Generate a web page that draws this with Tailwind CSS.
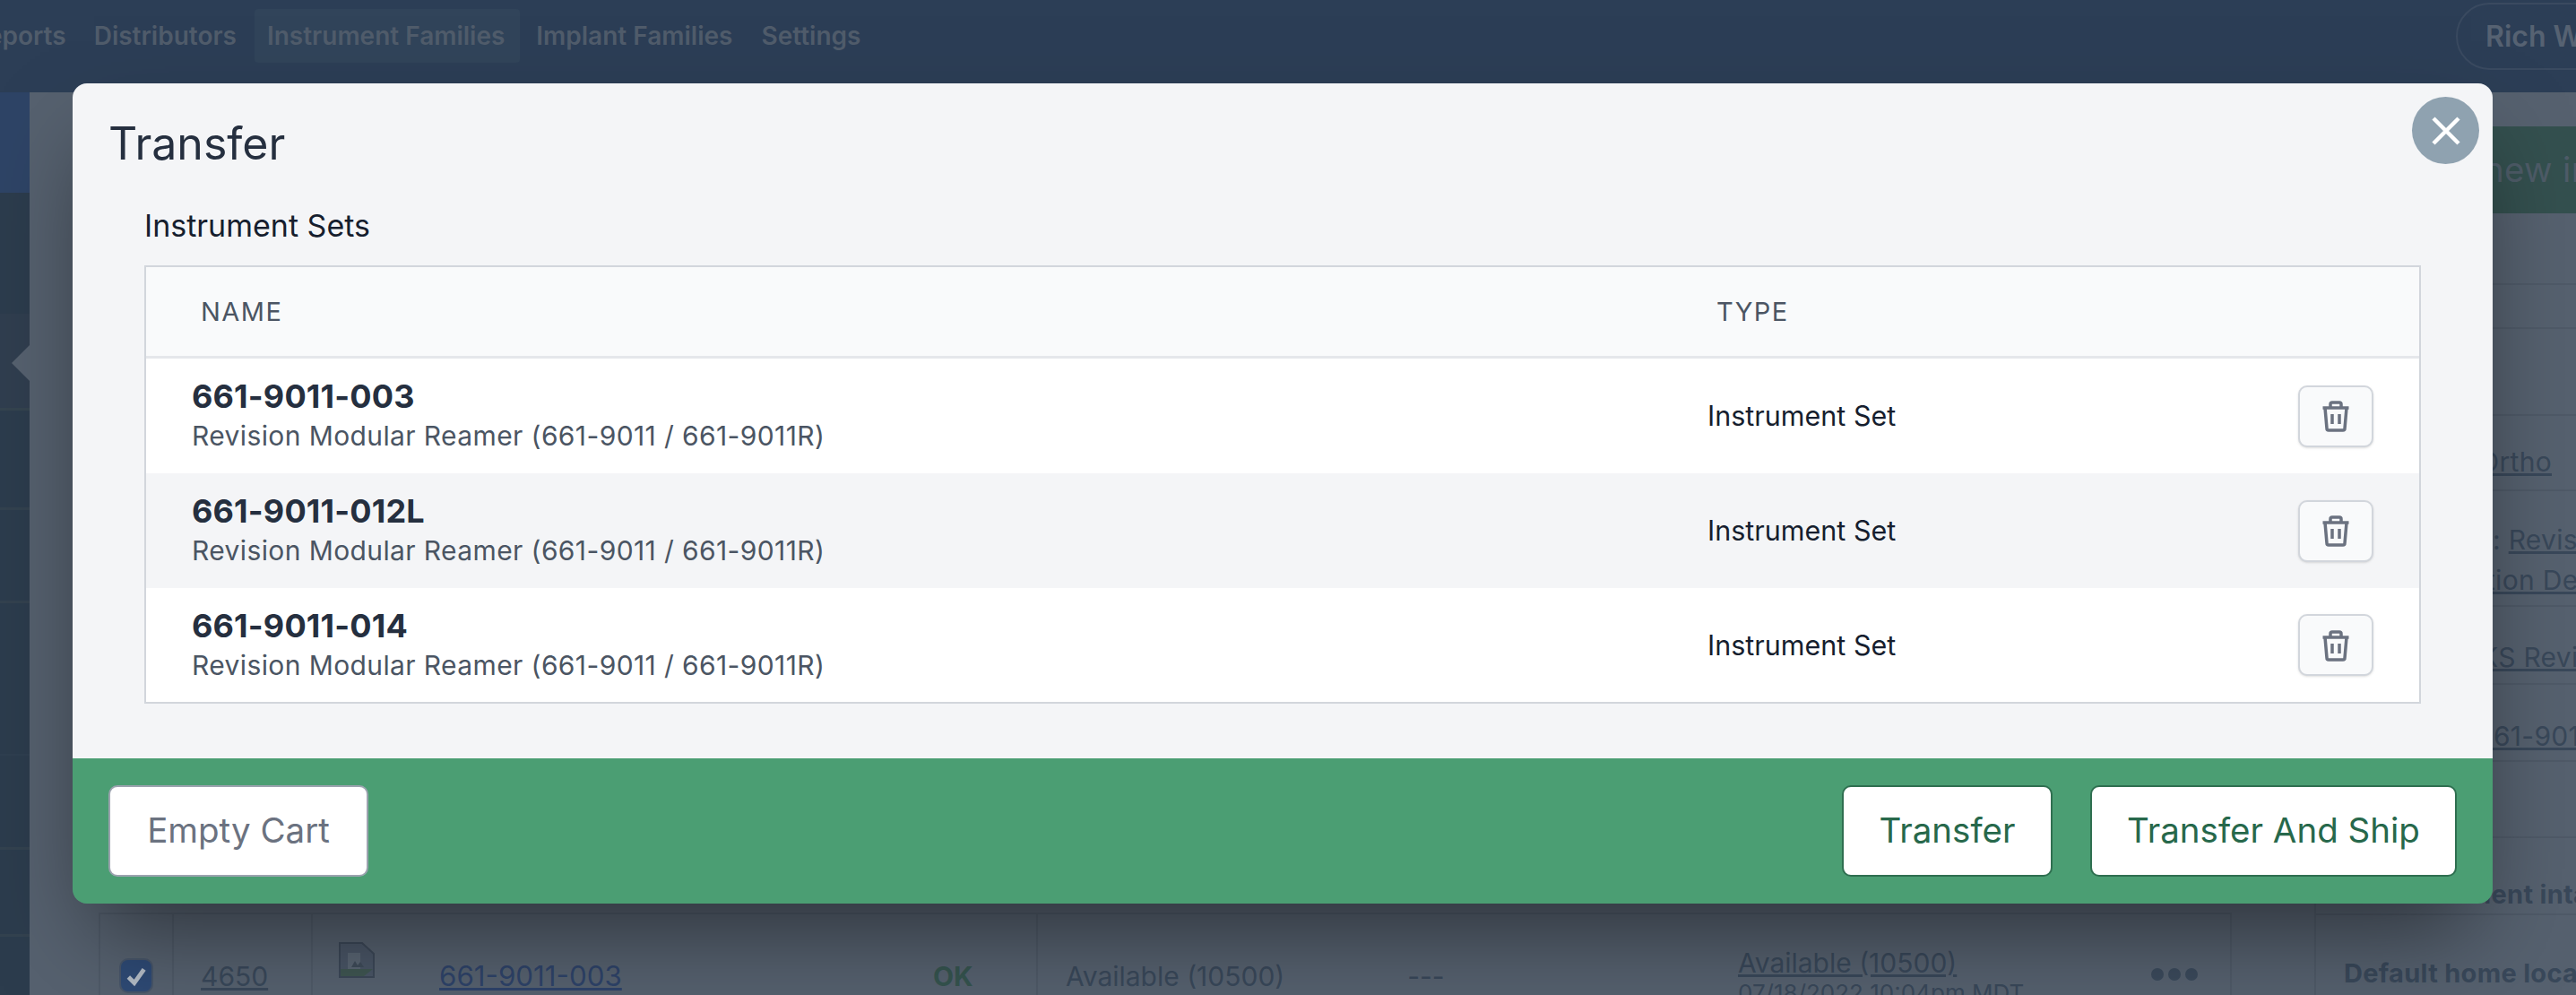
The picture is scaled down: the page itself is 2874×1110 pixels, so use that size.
<!doctype html>
<html lang="en">
<head>
<meta charset="utf-8">
<title>Transfer</title>
<script src="https://cdn.jsdelivr.net/npm/@tailwindcss/browser@4"></script>
</head>
<body class="m-0 h-[1110px] w-[2874px] overflow-hidden bg-[#56616f] font-['Inter',sans-serif]">
<div class="relative h-[1110px] w-[2874px] overflow-hidden">
  <!-- dimmed page behind the dialog -->
  <header class="flex h-[103px] items-start bg-[#2c3e56] text-[28px] font-semibold text-[#505c6b]">
    <nav class="ml-[-46px] mt-[10px] flex h-[60px] items-center">
      <span class="px-[14px]">Reports</span>
      <span class="ml-[3px] px-[14px]">Distributors</span>
      <span class="ml-[6px] flex h-[60px] items-center rounded bg-[#31445a] pl-[14px] pr-[17px]">Instrument Families</span>
      <span class="px-[18px]">Implant Families</span>
      <span class="px-[14px]">Settings</span>
    </nav>
    <div class="ml-auto mr-[-166px] mt-[3px] flex h-[75px] w-[300px] items-center whitespace-nowrap rounded-full border-2 border-[#3a4a60] pl-[31px] text-[32px] font-semibold text-[#566272]">Rich Wilson</div>
  </header>
  <div class="flex h-[1007px]">
    <aside class="relative flex w-[33px] flex-col bg-[#2c3c4d]">
      <div class="h-[112px] bg-[#2e4466]"></div>
      <div class="h-[135px]"></div>
      <div class="h-[108px] border-b-[3px] border-[#35444f] bg-[#303e4f]"></div>
      <div class="h-[111px] border-b-[3px] border-[#33424f]"></div>
      <div class="h-[104px] border-b-[3px] border-[#33424f]"></div>
      <div class="h-[170px] border-b-[2px] border-[#2f3f50]"></div>
      <div class="h-[105px] border-b-[3px] border-[#33424f]"></div>
      <div class="h-[97px] border-b-[3px] border-[#33424f]"></div>
      <svg class="absolute left-[13px] top-[282px]" width="20" height="40" viewBox="0 0 20 40"><path d="M20 0 L0 20 L20 40 Z" fill="#56616f"/></svg>
    </aside>
    <main class="flex flex-1">
      <section class="ml-[77px] mr-[92px] mt-auto h-[92px] w-[2380px] border-x-2 border-t-2 border-[#4f5a68] text-[30px] leading-[41px] text-[#39485a]">
        <div class="grid h-full grid-cols-[82px_155px_624px_185px_783px_123px] items-center">
          <div class="flex h-full items-end justify-center border-r-2 border-[#4f5a68] pb-[2px]">
            <span class="flex h-[39px] w-[38px] items-center justify-center rounded-[10px] border-2 border-[#475569] bg-[#2e4a75]">
              <svg width="26" height="26" viewBox="0 0 24 24"><path d="M4 13 L10 19 L20 5" fill="none" stroke="#b4bcc6" stroke-width="4.5"/></svg>
            </span>
          </div>
          <div class="flex h-full items-end border-r-2 border-[#4f5a68] pl-[30px]"><span class="underline">4650</span></div>
          <div class="flex h-full items-end">
            <svg class="mb-[19px] ml-[29px] mr-[72px]" width="40" height="40" viewBox="0 0 40 40"><path d="M1 1 H26 L39 13 V39 H1 Z" fill="#4a5667" stroke="#3c4858" stroke-width="2"/><path d="M10 12 H24 V30 H10 Z" fill="#5a6674"/><path d="M14 28 L18 21 L21 26 L24 22 L28 28 Z" fill="#3f4c5a"/><path d="M2 30 H38 L28 38 H2 Z" fill="#3f5652"/></svg>
            <span class="text-[31.3px] text-[#2e4369] underline">661-9011-003</span>
          </div>
          <div class="flex h-full items-end border-r-2 border-[#4f5a68] pl-[68px] font-bold text-[#35544f]"><span>OK</span></div>
          <div class="flex h-full items-end pl-[31px]"><span>Available (10500)</span><span class="ml-[137px]">---</span></div>
          <div class="h-full"></div>
        </div>
      </section>
      <div class="w-[292px]"></div>
    </main>
  </div>

  <!-- right column, behind the dialog -->
  <aside class="absolute right-0 top-[103px] flex h-[1007px] w-[292px] flex-col overflow-hidden border-l-2 border-[#4f5a68] text-[30px] tracking-[0.01em] text-[#39485a]">
    <div class="mt-[38px] flex h-[100px] w-[292px] items-center bg-[#34504f] pl-[187px] text-[38.5px] text-[#4e5c68]"><span class="whitespace-nowrap">new instrument</span></div>
    <div class="h-[82px] border-b-2 border-[#4f5a68]"></div>
    <div class="h-[50px] border-b-2 border-[#4f5a68]"></div>
    <div class="h-[99px] border-b-2 border-[#4f5a68]"></div>
    <div class="flex h-[86px] items-center justify-end border-b-2 border-[#4f5a68] pr-[27px] pt-[22px]"><span class="underline">Ortho</span></div>
    <div class="flex h-[132px] flex-col justify-center border-b-2 border-[#4f5a68] pl-[190px] pt-[26px] leading-[45px]"><span class="ml-[7px] whitespace-nowrap">: <span class="underline">Revision</span></span><span class="whitespace-nowrap underline">tion Detail</span></div>
    <div class="flex h-[88px] items-center border-b-2 border-[#4f5a68] pl-[183px] pt-[28px]"><span class="whitespace-nowrap underline">KS Revision</span></div>
    <div class="flex h-[87px] items-center border-b-2 border-[#4f5a68] pl-[179px] pt-[32px]"><span class="whitespace-nowrap underline">661-9011</span></div>
    <div class="h-[88px] border-b-2 border-[#4f5a68]"></div>
    <div class="flex h-[87px] items-center border-b-2 border-[#4f5a68] pl-[84px] pt-[40px] text-[29px] font-bold"><span class="whitespace-nowrap">Instrument intake</span></div>
    <div class="flex h-[90px] items-center pl-[31px] pt-[40px] text-[29px] font-bold"><span class="whitespace-nowrap">Default home location</span></div>
  </aside>

  <!-- tail of the obscured table -->
  <div class="absolute left-[1939px] top-[1056px] text-[30px] leading-[36px] text-[#39485a]"><span class="underline">Available (10500)</span><div class="text-[26px] leading-[32px]">07/18/2022 10:04pm MDT</div></div>
  <div class="absolute left-[2400px] top-[1080px] flex gap-[5px]"><span class="h-[14px] w-[14px] rounded-full bg-[#3b4a5c]"></span><span class="h-[14px] w-[14px] rounded-full bg-[#3b4a5c]"></span><span class="h-[14px] w-[14px] rounded-full bg-[#3b4a5c]"></span></div>

  <!-- dialog -->
  <div class="absolute left-[81px] top-[93px] w-[2700px] rounded-[16px] shadow-[0_50px_100px_-24px_rgba(0,0,0,0.5)]">
    <div class="relative h-[753px] rounded-t-[16px] bg-[#f4f5f7] pt-[43px]">
      <button class="absolute right-[15px] top-[15px] flex h-[75px] w-[75px] items-center justify-center rounded-full bg-[#8fa2b0]">
        <svg width="34" height="34" viewBox="0 0 34 34"><path d="M3 3 L31 31 M31 3 L3 31" stroke="#fff" stroke-width="4.5" fill="none"/></svg>
      </button>
      <h2 class="h-[48px] pl-[40px] text-[50px] leading-[48px] font-normal text-[#252f3f]">Transfer</h2>
      <div class="px-[80px]">
        <h3 class="mb-[24px] mt-[48px] h-[40px] text-[34px] leading-[40px] font-normal text-[#161e2e]">Instrument Sets</h3>
        <div class="border-2 border-[#d2d6dc] bg-white">
          <div class="flex h-[102px] items-center border-b-[3px] border-[#e5e7eb] bg-[#f9fafb] text-[29px] tracking-[0.05em] text-[#4b5563]">
            <span class="ml-[61px] w-[1691px]">NAME</span><span>TYPE</span>
          </div>
          <div class="flex h-[128px] items-center bg-white">
            <div class="ml-[51px] w-[1691px]">
              <div class="text-[36px] leading-[44px] font-bold tracking-[0.005em] text-[#252f3f]">661-9011-003</div>
              <div class="text-[30px] leading-[44px] tracking-[0.013em] text-[#4b5563]">Revision Modular Reamer (661-9011 / 661-9011R)</div>
            </div>
            <span class="text-[30.5px] text-[#161e2e]">Instrument Set</span>
            <button class="ml-auto mr-[51px] flex h-[69px] w-[84px] items-center justify-center rounded-[10px] border-2 border-[#d2d6dc] bg-[#f9fafb] shadow-sm">
              <svg width="36" height="36" viewBox="0 0 36 36" fill="none" stroke="#6b7280" stroke-width="3.5" stroke-linejoin="round"><path d="M3.5 9 H32.5"/><path d="M12 9 V5 a2 2 0 0 1 2-2 h8 a2 2 0 0 1 2 2 V9"/><path d="M6 9 L8 32 a2 2 0 0 0 2 2 h16 a2 2 0 0 0 2-2 L30 9"/><path d="M14 16 V27 M22 16 V27"/></svg>
            </button>
          </div>
          <div class="flex h-[128px] items-center bg-[#f4f5f7]">
            <div class="ml-[51px] w-[1691px]">
              <div class="text-[36px] leading-[44px] font-bold tracking-[0.005em] text-[#252f3f]">661-9011-012L</div>
              <div class="text-[30px] leading-[44px] tracking-[0.013em] text-[#4b5563]">Revision Modular Reamer (661-9011 / 661-9011R)</div>
            </div>
            <span class="text-[30.5px] text-[#161e2e]">Instrument Set</span>
            <button class="ml-auto mr-[51px] flex h-[69px] w-[84px] items-center justify-center rounded-[10px] border-2 border-[#d2d6dc] bg-[#f9fafb] shadow-sm">
              <svg width="36" height="36" viewBox="0 0 36 36" fill="none" stroke="#6b7280" stroke-width="3.5" stroke-linejoin="round"><path d="M3.5 9 H32.5"/><path d="M12 9 V5 a2 2 0 0 1 2-2 h8 a2 2 0 0 1 2 2 V9"/><path d="M6 9 L8 32 a2 2 0 0 0 2 2 h16 a2 2 0 0 0 2-2 L30 9"/><path d="M14 16 V27 M22 16 V27"/></svg>
            </button>
          </div>
          <div class="flex h-[127px] items-center bg-white">
            <div class="ml-[51px] w-[1691px]">
              <div class="text-[36px] leading-[44px] font-bold tracking-[0.005em] text-[#252f3f]">661-9011-014</div>
              <div class="text-[30px] leading-[44px] tracking-[0.013em] text-[#4b5563]">Revision Modular Reamer (661-9011 / 661-9011R)</div>
            </div>
            <span class="text-[30.5px] text-[#161e2e]">Instrument Set</span>
            <button class="ml-auto mr-[51px] flex h-[69px] w-[84px] items-center justify-center rounded-[10px] border-2 border-[#d2d6dc] bg-[#f9fafb] shadow-sm">
              <svg width="36" height="36" viewBox="0 0 36 36" fill="none" stroke="#6b7280" stroke-width="3.5" stroke-linejoin="round"><path d="M3.5 9 H32.5"/><path d="M12 9 V5 a2 2 0 0 1 2-2 h8 a2 2 0 0 1 2 2 V9"/><path d="M6 9 L8 32 a2 2 0 0 0 2 2 h16 a2 2 0 0 0 2-2 L30 9"/><path d="M14 16 V27 M22 16 V27"/></svg>
            </button>
          </div>
        </div>
      </div>
    </div>
    <div class="flex h-[162px] items-center rounded-b-[16px] bg-[#4b9e73] px-[40px]">
      <button class="h-[102px] w-[290px] rounded-[10px] border-2 border-[#9ca3af] bg-white text-[38.5px] text-[#6b7280]">Empty Cart</button>
      <button class="ml-auto h-[102px] w-[235px] rounded-[10px] border-2 border-[#2f6f50] bg-white text-[38.5px] text-[#27684b]">Transfer</button>
      <button class="ml-[42px] h-[102px] w-[409px] rounded-[10px] border-2 border-[#2f6f50] bg-white text-[38.5px] text-[#27684b]">Transfer And Ship</button>
    </div>
  </div>
</div>
</body>
</html>
